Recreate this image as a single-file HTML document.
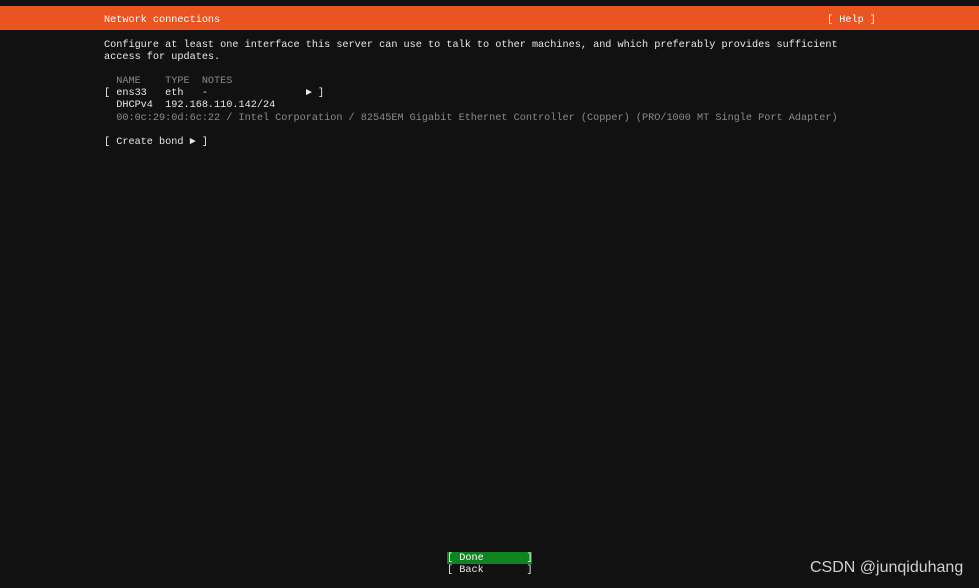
<!DOCTYPE html>
<html><head><style>
body{margin:0;width:979px;height:588px;background:#111;overflow:hidden;position:relative;font-family:"Liberation Mono",monospace;font-size:10.2px;color:#e8e8e8}
.l{position:absolute;white-space:pre;line-height:12px;height:12px}
.bar{position:absolute;left:0;top:6px;width:979px;height:24px;background:#e95420}
.g{color:#8a8a8a}
</style></head><body>
<div class="bar"></div>
<div class="l" style="left:104px;top:15px;color:#fff">Network connections</div>
<div class="l" style="left:827px;top:15px;color:#fff">[ Help ]</div>
<div class="l" style="left:104px;top:40px">Configure at least one interface this server can use to talk to other machines, and which preferably provides sufficient</div>
<div class="l" style="left:104px;top:52px">access for updates.</div>
<div class="l g" style="left:104px;top:76px">  NAME    TYPE  NOTES</div>
<div class="l" style="left:104px;top:88px">[ ens33   eth   -                ► ]</div>
<div class="l" style="left:104px;top:100px">  DHCPv4  192.168.110.142/24</div>
<div class="l g" style="left:104px;top:113px">  00:0c:29:0d:6c:22 / Intel Corporation / 82545EM Gigabit Ethernet Controller (Copper) (PRO/1000 MT Single Port Adapter)</div>
<div class="l" style="left:104px;top:137px">[ Create bond ► ]</div>
<div class="l" style="left:447px;top:552px;width:85px;background:#0e8420;color:#fff;line-height:14px">[ Done       ]</div>
<div class="l" style="left:447px;top:565px">[ Back       ]</div>
<div style="position:absolute;left:810px;top:559px;font-family:'Liberation Sans',sans-serif;font-size:16px;color:#d0d0d0">CSDN @junqiduhang</div>
</body></html>
